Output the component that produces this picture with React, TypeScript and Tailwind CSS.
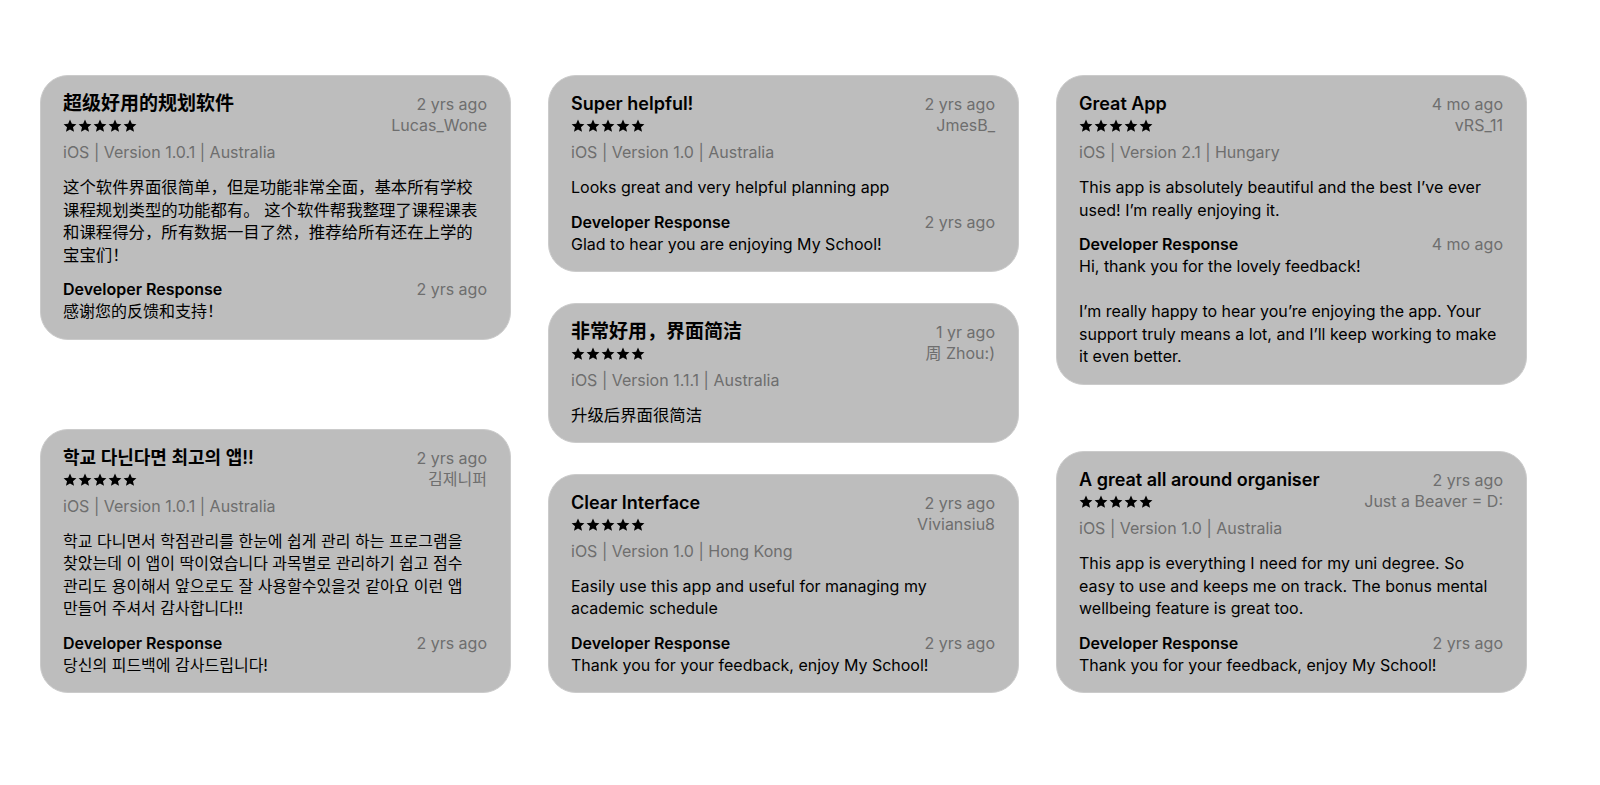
import React from 'react';

interface Review {
  title: string;
  time: string;
  author: string;
  meta: string;
  body: string;
  reply?: { time: string; text: string };
  lang?: 'zh' | 'ko';
}

const columns: Review[][] = [
  [
    {
      title: '超级好用的规划软件',
      time: '2 yrs ago',
      author: 'Lucas_Wone',
      meta: 'iOS | Version 1.0.1 | Australia',
      body: '这个软件界面很简单，但是功能非常全面，基本所有学校课程规划类型的功能都有。 这个软件帮我整理了课程课表和课程得分，所有数据一目了然，推荐给所有还在上学的宝宝们！',
      reply: { time: '2 yrs ago', text: '感谢您的反馈和支持！' },
      lang: 'zh',
    },
    {
      title: '학교 다닌다면 최고의 앱!!',
      time: '2 yrs ago',
      author: '김제니퍼',
      meta: 'iOS | Version 1.0.1 | Australia',
      body: '학교 다니면서 학점관리를 한눈에 쉽게 관리 하는 프로그램을 찾았는데 이 앱이 딱이였습니다 과목별로 관리하기 쉽고 점수 관리도 용이해서 앞으로도 잘 사용할수있을것 같아요 이런 앱 만들어 주셔서 감사합니다!!',
      reply: { time: '2 yrs ago', text: '당신의 피드백에 감사드립니다!' },
      lang: 'ko',
    },
  ],
  [
    {
      title: 'Super helpful!',
      time: '2 yrs ago',
      author: 'JmesB_',
      meta: 'iOS | Version 1.0 | Australia',
      body: 'Looks great and very helpful planning app',
      reply: { time: '2 yrs ago', text: 'Glad to hear you are enjoying My School!' },
    },
    {
      title: '非常好用，界面简洁',
      time: '1 yr ago',
      author: '周 Zhou:)',
      meta: 'iOS | Version 1.1.1 | Australia',
      body: '升级后界面很简洁',
      lang: 'zh',
    },
    {
      title: 'Clear Interface',
      time: '2 yrs ago',
      author: 'Viviansiu8',
      meta: 'iOS | Version 1.0 | Hong Kong',
      body: 'Easily use this app and useful for managing my academic schedule',
      reply: { time: '2 yrs ago', text: 'Thank you for your feedback, enjoy My School!' },
    },
  ],
  [
    {
      title: 'Great App',
      time: '4 mo ago',
      author: 'vRS_11',
      meta: 'iOS | Version 2.1 | Hungary',
      body: 'This app is absolutely beautiful and the best I’ve ever used! I’m really enjoying it.',
      reply: {
        time: '4 mo ago',
        text: 'Hi, thank you for the lovely feedback!\n\nI’m really happy to hear you’re enjoying the app. Your support truly means a lot, and I’ll keep working to make it even better.',
      },
    },
    {
      title: 'A great all around organiser',
      time: '2 yrs ago',
      author: 'Just a Beaver = D:',
      meta: 'iOS | Version 1.0 | Australia',
      body: 'This app is everything I need for my uni degree. So easy to use and keeps me on track. The bonus mental wellbeing feature is great too.',
      reply: { time: '2 yrs ago', text: 'Thank you for your feedback, enjoy My School!' },
    },
  ],
];

function Stars() {
  return (
    <div className="flex items-center gap-[1px] h-[22px]">
      {[0, 1, 2, 3, 4].map(i => (
        <svg key={i} width="14" height="14" viewBox="0 0 24 24" fill="#000">
          <path d="M12 1l3.2 7.2 7.8.7-5.9 5.2 1.8 7.7L12 17.8l-6.9 4 1.8-7.7L1 8.9l7.8-.7z" />
        </svg>
      ))}
    </div>
  );
}

function Card({ r }: { r: Review }) {
  const zh = r.lang === 'zh';
  const ko = r.lang === 'ko';
  return (
    <div className="rounded-[28px] bg-[#bdbdbd] border border-[#cbcbcb] pl-[22px] pr-[23px] pt-[17px] pb-[16px]">
      <div className="flex justify-between">
        <div>
          <div className={`${zh ? 'text-[19px]' : 'text-[18px]'} font-semibold leading-[22px] text-black`}>{r.title}</div>
          <Stars />
        </div>
        <div className="text-right text-[16px] leading-[21px] text-[#6e6e6e] pt-[1px]">
          <div>{r.time}</div>
          <div>{r.author}</div>
        </div>
      </div>
      <div className="mt-[4px] text-[16px] leading-[22px] text-[#6e6e6e]">{r.meta}</div>
      <div
        className={`mt-[13px] ${zh ? 'text-[16.4px]' : 'text-[16px]'} ${ko ? 'break-keep' : ''} leading-[22.5px] text-black`}
      >
        {r.body}
      </div>
      {r.reply && (
        <div className="mt-[12px]">
          <div className="flex justify-between text-[16px] leading-[22px]">
            <span className="font-semibold text-black">Developer Response</span>
            <span className="text-[#6e6e6e]">{r.reply.time}</span>
          </div>
          <div className="text-[16px] leading-[22.5px] text-black whitespace-pre-line">{r.reply.text}</div>
        </div>
      )}
    </div>
  );
}

export default function App() {
  return (
    <div
      className="w-[1600px] h-[785px] bg-white pt-[75px] pl-[40px] flex gap-[37px]"
      style={{ fontFamily: 'Inter, "Noto Sans CJK SC", "Noto Sans CJK KR", sans-serif' }}
    >
      {columns.map((col, i) => (
        <div key={i} className="w-[471px] h-[618px] flex flex-col justify-between">
          {col.map((r, j) => (
            <Card key={j} r={r} />
          ))}
        </div>
      ))}
    </div>
  );
}
